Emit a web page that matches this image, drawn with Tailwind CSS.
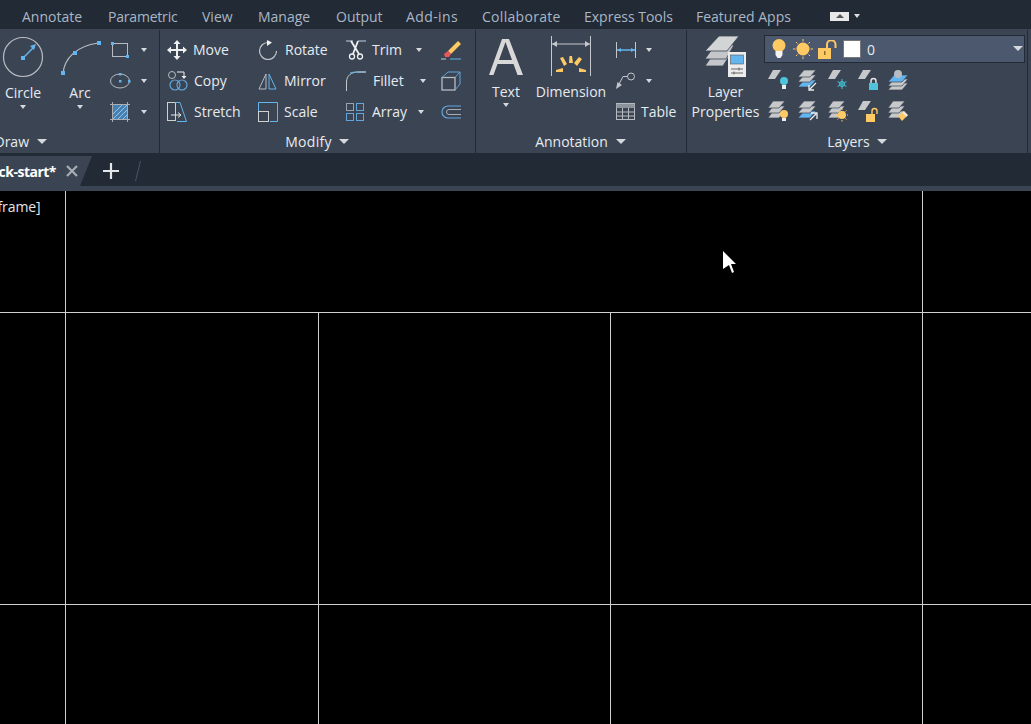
<!DOCTYPE html>
<html lang="en">
<head>
<meta charset="UTF-8">
<title>Ribbon</title>
<script src="https://cdn.jsdelivr.net/npm/@tailwindcss/browser@4"></script>
</head>
<body class="bg-black overflow-hidden font-['Open_Sans',sans-serif] text-[14px] text-[#e6ebf0]">
<div class="w-[1031px] h-[724px] flex flex-col overflow-hidden">

  <!-- top tabs -->
  <div class="h-[29px] bg-[#222a35] flex items-center pl-[22px] pt-[3px] text-[#a9b7c6] shrink-0">
    <span class="w-[86px]">Annotate</span>
    <span class="w-[94px] tracking-[-0.2px]">Parametric</span>
    <span class="w-[56px]">View</span>
    <span class="w-[78px]">Manage</span>
    <span class="w-[70px]">Output</span>
    <span class="w-[76px] tracking-[0.4px]">Add-ins</span>
    <span class="w-[102px] tracking-[0.3px]">Collaborate</span>
    <span class="w-[112px]">Express Tools</span>
    <span class="w-[134px]">Featured Apps</span>
    <span class="w-[19px] h-[9px] bg-[#e8e8e8] flex items-center justify-center"><span class="w-0 h-0 border-x-[4px] border-x-transparent border-b-[4px] border-b-[#555]"></span></span>
    <span class="ml-[5px] w-0 h-0 border-x-[3px] border-x-transparent border-t-[4px] border-t-[#ddd]"></span>
  </div>

  <!-- ribbon -->
  <div class="h-[124px] bg-[#3b4453] flex shrink-0 pt-[1px]">

    <!-- Draw -->
    <div class="w-[160px] border-r border-[#222a35] flex flex-col shrink-0">
      <div class="h-[100px] flex pt-[4px]">
        <div class="w-[46px] flex flex-col items-center">
          <svg width="42" height="42" viewBox="0 0 42 42" fill="none" class="mt-[2px]"><circle cx="21" cy="21" r="19.5" stroke="#b8bcc2" stroke-width="1.2"/><path d="M21 22 32 11" stroke="#62b5ee" stroke-width="1.4"/><path d="M34 8 28 10 32 14z" fill="#62b5ee"/><rect x="19" y="20" width="4" height="4" fill="#62b5ee"/></svg>
          <span class="mt-[5px] leading-[20px]">Circle</span>
          <span class="mt-[2px] w-0 h-0 border-x-[3px] border-x-transparent border-t-[4px] border-t-[#d5d8dc]"></span>
        </div>
        <div class="w-[46px] ml-[11px] flex flex-col items-center">
          <svg width="46" height="42" viewBox="0 0 46 42" fill="none" class="mt-[2px]"><path d="M6 38C7 22 20 10 41 7" stroke="#b8bcc2" stroke-width="1.2"/><rect x="4" y="35" width="4" height="4" fill="#62b5ee"/><rect x="16" y="15" width="4" height="4" fill="#62b5ee"/><rect x="40" y="5" width="4" height="4" fill="#62b5ee"/></svg>
          <span class="mt-[5px] leading-[20px]">Arc</span>
          <span class="mt-[2px] w-0 h-0 border-x-[3px] border-x-transparent border-t-[4px] border-t-[#d5d8dc]"></span>
        </div>
        <div class="ml-[6px] flex flex-col">
          <div class="h-[31px] flex items-center">
            <svg width="22" height="22" viewBox="0 0 22 22" fill="none"><rect x="3.5" y="4.5" width="15" height="13" stroke="#b8bcc2"/><rect x="2" y="3" width="3" height="3" fill="#62b5ee"/><rect x="17" y="16" width="3" height="3" fill="#62b5ee"/></svg>
            <span class="ml-[10px] w-0 h-0 border-x-[3px] border-x-transparent border-t-[4px] border-t-[#d5d8dc]"></span>
          </div>
          <div class="h-[31px] flex items-center">
            <svg width="22" height="22" viewBox="0 0 22 22" fill="none"><ellipse cx="11" cy="11" rx="9.5" ry="7" stroke="#b8bcc2"/><rect x="10" y="10" width="2.5" height="2.5" fill="#62b5ee"/><rect x="10" y="3" width="2.5" height="2.5" fill="#62b5ee"/><rect x="19" y="10" width="2.5" height="2.5" fill="#62b5ee"/></svg>
            <span class="ml-[10px] w-0 h-0 border-x-[3px] border-x-transparent border-t-[4px] border-t-[#d5d8dc]"></span>
          </div>
          <div class="h-[31px] flex items-center">
            <svg width="22" height="22" viewBox="0 0 22 22" fill="none"><rect x="3.5" y="3.5" width="15" height="15" fill="#4a80b0"/><path d="M4 13 13 4M4 18 18 4M9 18 18 9M14 18 18 14" stroke="#8cc8f0"/><path d="M1 3.5H21M1 18.5H21M3.5 1V21M18.5 1V21" stroke="#a9adb3"/></svg>
            <span class="ml-[10px] w-0 h-0 border-x-[3px] border-x-transparent border-t-[4px] border-t-[#d5d8dc]"></span>
          </div>
        </div>
      </div>
      <div class="flex-1 flex items-center justify-end pr-[112px] gap-[8px] pb-[1px]">
        <span>Draw</span>
        <span class="w-0 h-0 border-x-[5px] border-x-transparent border-t-[5px] border-t-[#d5d8dc]"></span>
      </div>
    </div>

    <!-- Modify -->
    <div class="w-[316px] border-r border-[#222a35] flex flex-col shrink-0">
      <div class="h-[100px] pt-[4px] pl-[7px] grid grid-cols-[91px_88px_95px_20px] grid-rows-[31px_31px_31px] items-center">
        <div class="flex items-center gap-[6px]">
          <svg width="20" height="20" viewBox="0 0 20 20" fill="#f0f0f0"><path d="M10 0 13.500 4H11V9H16V6.500L20 10 16 13.500V11H11V16H13.500L10 20 6.500 16H9V11H4V13.500L0 10 4 6.500V9H9V4H6.500z"/></svg>
          <span>Move</span>
        </div>
        <div class="flex items-center gap-[7px]">
          <svg width="20" height="20" viewBox="0 0 20 20" fill="none"><path d="M10 2.500A8.500 8.500 0 1 0 18.500 11" stroke="#c4c8cc" stroke-width="1.200"/><path d="M9 0 14 2.500 9 6z" fill="#f0f0f0"/></svg>
          <span>Rotate</span>
        </div>
        <div class="flex items-center gap-[6px]">
          <svg width="20" height="20" viewBox="0 0 20 20" fill="none"><path d="M0 1H7M12 1H20" stroke="#8fa2b5" stroke-width="1.500"/><path d="M5 1 13 14M12 1 7 14" stroke="#f0f0f0" stroke-width="1.800"/><circle cx="6" cy="16.500" r="2.500" stroke="#f0f0f0" stroke-width="1.300"/><circle cx="14" cy="16.500" r="2.500" stroke="#f0f0f0" stroke-width="1.300"/></svg>
          <span>Trim</span>
          <span class="ml-[8px] w-0 h-0 border-x-[3px] border-x-transparent border-t-[4px] border-t-[#d5d8dc]"></span>
        </div>
        <svg width="20" height="20" viewBox="0 0 20 20" fill="none"><path d="M0 19H5" stroke="#ccc"/><path d="M9 19H20" stroke="#62b5ee"/><path d="M7 11 17 1 20 4 10 14z" fill="#ffc964"/><path d="M7 11 10 14 8 17H4L3 14z" fill="#e8575a"/></svg>

        <div class="flex items-center gap-[6px]">
          <svg width="21" height="20" viewBox="0 0 21 20" fill="none"><circle cx="5" cy="4" r="3.500" stroke="#b8bcc2"/><path d="M10 1H17V6" stroke="#f0f0f0"/><path d="M14.500 5H19.500L17 8z" fill="#f0f0f0"/><circle cx="8" cy="14" r="5" stroke="#62a5dc" stroke-width="1.200"/><circle cx="15" cy="14" r="5" stroke="#62a5dc" stroke-width="1.200"/></svg>
          <span>Copy</span>
        </div>
        <div class="flex items-center gap-[7px]">
          <svg width="19" height="20" viewBox="0 0 19 20" fill="none"><path d="M8 3 1 18H8z" stroke="#b8bcc2"/><path d="M11 3 18 18H11z" stroke="#62b5ee"/></svg>
          <span>Mirror</span>
        </div>
        <div class="flex items-center gap-[7px]">
          <svg width="20" height="20" viewBox="0 0 20 20" fill="none"><path d="M0.500 20V11C0.500 5 5 1 12 1" stroke="#c4c8cc"/><path d="M4 2C6 1.300 8 1 12 1H20" stroke="#62b5ee"/><path d="M12 1H20" stroke="#c4c8cc"/></svg>
          <span>Fillet</span>
          <span class="ml-[9px] w-0 h-0 border-x-[3px] border-x-transparent border-t-[4px] border-t-[#d5d8dc]"></span>
        </div>
        <svg width="20" height="20" viewBox="0 0 20 20" fill="none"><rect x="1" y="6.500" width="13" height="12.500" stroke="#b8bcc2" stroke-width="1.300"/><path d="M1 6.500 7 1H19V13L14 19M14 6.500 19 1" stroke="#62a5dc"/></svg>

        <div class="flex items-center gap-[7px]">
          <svg width="20" height="20" viewBox="0 0 20 20" fill="none"><rect x="0.500" y="0.500" width="8" height="18" stroke="#d0d0d0"/><path d="M4 13H13M11 10.500 14 13 11 15.500" stroke="#e8e8e8"/><path d="M13 0.500 19.500 19.500H10" stroke="#62b5ee"/><path d="M8 0.500H13" stroke="#62b5ee"/></svg>
          <span>Stretch</span>
        </div>
        <div class="flex items-center gap-[6px]">
          <svg width="20" height="20" viewBox="0 0 20 20" fill="none"><path d="M0.500 9V0.500H19.500V19.500H12" stroke="#62b5ee"/><rect x="0.500" y="9.500" width="10" height="10" stroke="#d0d0d0"/></svg>
          <span>Scale</span>
        </div>
        <div class="flex items-center gap-[8px]">
          <svg width="18" height="18" viewBox="0 0 18 18" fill="none"><rect x="0.500" y="0.500" width="7" height="7" stroke="#9aa3ad"/><rect x="10.500" y="0.500" width="7" height="7" stroke="#62a5dc"/><rect x="0.500" y="10.500" width="7" height="7" stroke="#62a5dc"/><rect x="10.500" y="10.500" width="7" height="7" stroke="#62a5dc"/></svg>
          <span>Array</span>
          <span class="ml-[3px] w-0 h-0 border-x-[3px] border-x-transparent border-t-[4px] border-t-[#d5d8dc]"></span>
        </div>
        <svg width="20" height="14" viewBox="0 0 20 14" fill="none"><path d="M20 1H7A6 6 0 0 0 7 13H20" stroke="#62a5dc" stroke-width="1.200"/><path d="M20 4.500H8A2.500 2.500 0 0 0 8 9.500H20" stroke="#a9adb3"/></svg>
      </div>
      <div class="flex-1 flex items-center justify-center gap-[7px] pb-[1px] pr-[1px]">
        <span class="tracking-[0.3px]">Modify</span>
        <span class="w-0 h-0 border-x-[5px] border-x-transparent border-t-[5px] border-t-[#d5d8dc]"></span>
      </div>
    </div>

    <!-- Annotation -->
    <div class="w-[211px] border-r border-[#222a35] flex flex-col shrink-0">
      <div class="h-[100px] flex pt-[4px]">
        <div class="w-[60px] flex flex-col items-center">
          <svg width="36" height="40" viewBox="0 0 36 40" fill="#d8d8d8" class="mt-[3px]"><path d="M14 2H21L35 38H29.500L25.500 27H9.500L5.500 38H1L14 2ZM11 23H24L17.500 5z" fill-rule="evenodd"/></svg>
          <span class="mt-[5px] leading-[20px]">Text</span>
          <span class="mt-[1px] w-0 h-0 border-x-[3px] border-x-transparent border-t-[4px] border-t-[#d5d8dc]"></span>
        </div>
        <div class="w-[76px] ml-[-3px] flex flex-col items-center">
          <svg width="42" height="41" viewBox="0 0 42 41" fill="none" class="mt-[2px]"><path d="M1.500 0V40M40.500 0V40" stroke="#c4c8cc"/><path d="M2 8H40" stroke="#c4c8cc"/><path d="M2 8 7 5V11zM40 8 35 5V11z" fill="#c4c8cc"/><path d="M19.500 20H22L23 27H19zM10 22 13 21 17 28 14 30zM29 21 32 23 27 30 24 27zM6 34 13 32V36H6zM36 34 29 32V36H36z" fill="#ffc964"/></svg>
          <span class="mt-[5px] leading-[20px] whitespace-nowrap">Dimension</span>
        </div>
        <div class="ml-[7px] flex flex-col">
          <div class="h-[31px] flex items-center">
            <svg width="20" height="18" viewBox="0 0 20 18" fill="none"><path d="M0.500 1V17M19.500 1V17" stroke="#c4c8cc"/><path d="M1 9H19" stroke="#62b5ee" stroke-width="1.500"/><path d="M1 9 5 7V11zM19 9 15 7V11z" fill="#62b5ee"/></svg>
            <span class="ml-[10px] w-0 h-0 border-x-[3px] border-x-transparent border-t-[4px] border-t-[#d5d8dc]"></span>
          </div>
          <div class="h-[31px] flex items-center">
            <svg width="20" height="18" viewBox="0 0 20 18" fill="none"><circle cx="15" cy="4.500" r="3.500" stroke="#c4c8cc"/><path d="M11.500 4.500H7L2 14" stroke="#c4c8cc"/><path d="M0 17 1.500 10 6 13z" fill="#c4c8cc"/></svg>
            <span class="ml-[10px] w-0 h-0 border-x-[3px] border-x-transparent border-t-[4px] border-t-[#d5d8dc]"></span>
          </div>
          <div class="h-[31px] flex items-center gap-[6px]">
            <svg width="19" height="17" viewBox="0 0 19 17" fill="none"><rect x="0.500" y="0.500" width="18" height="16" stroke="#b8bcc2"/><path d="M0.500 1H18.500V5H0.500z" fill="#8d939b"/><path d="M1 9H18M1 13H18M6.500 5V16M12.500 5V16" stroke="#b8bcc2"/></svg>
            <span>Table</span>
          </div>
        </div>
      </div>
      <div class="flex-1 flex items-center justify-center gap-[8px] pb-[1px] pr-[1px]">
        <span>Annotation</span>
        <span class="w-0 h-0 border-x-[5px] border-x-transparent border-t-[5px] border-t-[#d5d8dc]"></span>
      </div>
    </div>

    <!-- Layers -->
    <div class="w-[341px] border-r border-[#222a35] flex flex-col shrink-0">
      <div class="h-[100px] flex pt-[4px]">
        <div class="w-[77px] flex flex-col items-center">
          <svg width="41" height="41" viewBox="0 0 41 41" class="mt-[2px]" stroke="#3b4453" stroke-width="0.800"><path d="M9 17H26L18 30H0z" fill="#c4c6c9"/><path d="M10 9H29L21 23H0z" fill="#c4c6c9"/><path d="M14 0H34L22 15H0z" fill="#d2d4d6"/><rect x="23" y="16" width="18" height="25" fill="#ececec" stroke="none"/><rect x="25.500" y="19" width="13" height="9" fill="#62b5ee" stroke="#555" stroke-width="0.600"/><path d="M26 33H38M26 37H38M34 31.500V34.500M29 35.500V38.500" stroke="#666" stroke-width="1"/></svg>
          <span class="mt-[5px] leading-[20px]">Layer</span>
          <span class="leading-[20px] whitespace-nowrap">Properties</span>
        </div>
        <div class="flex flex-col">
          <div class="w-[261px] h-[28px] mt-[1px] bg-[#4b586e] border border-[#222a35] flex items-center pl-[7px] relative">
            <svg width="14" height="20" viewBox="0 0 14 20"><circle cx="7" cy="6.500" r="6.500" fill="#ffc964"/><path d="M3.500 12H10.500V16L8.500 19H5.500L3.500 16z" fill="#f2f2f2"/></svg>
            <svg width="20" height="20" viewBox="0 0 20 20" class="ml-[7px]" stroke="#ffc964"><circle cx="10" cy="10" r="6.500" fill="#ffc964" stroke="none"/><path d="M10 0V2.500M10 17.500V20M0 10H2.500M17.500 10H20M3 3 4.500 4.500M15.500 15.500 17 17M3 17 4.500 15.500M15.500 4.500 17 3"/></svg>
            <svg width="19" height="19" viewBox="0 0 19 19" class="ml-[5px]" fill="none"><rect x="0" y="8" width="13" height="11" fill="#ffc964"/><path d="M9 8V4.500A4 4 0 0 1 17.500 4.500V8" stroke="#ffc964" stroke-width="2"/><rect x="6" y="11" width="1.500" height="4" fill="#8a6d33"/></svg>
            <span class="ml-[6px] w-[18px] h-[18px] bg-white border border-[#777]"></span>
            <span class="ml-[6px]">0</span>
            <span class="absolute right-[1px] top-[10px] w-0 h-0 border-x-[5px] border-x-transparent border-t-[5px] border-t-[#d5d8dc]"></span>
          </div>
          <div class="h-[31px] mt-[2px] flex items-start gap-[10px] pl-[4px] pt-[5px]">
            <svg width="20" height="21" viewBox="0 0 20 21"><path d="M5 0H13L7 9H0z" fill="#c6c8ca"/><circle cx="16" cy="11" r="4" fill="#4fc3d9"/><rect x="14" y="15" width="4" height="4" fill="#eee"/></svg>
            <svg width="20" height="21" viewBox="0 0 20 21" stroke="#3b4453" stroke-width="0.700"><path d="M6 10H18L12 17H0z" fill="#62b5ee"/><path d="M6 5H18L12 12H0z" fill="#c6c8ca"/><path d="M6 0H18L12 7H0z" fill="#c6c8ca"/><path d="M18 13 12 19M11 15V20H16" stroke="#eee" stroke-width="1.300" fill="none"/></svg>
            <svg width="20" height="21" viewBox="0 0 20 21"><path d="M5 0H13L7 9H0z" fill="#c6c8ca"/><path d="M14 9V19M9.500 11.500 18.500 16.500M18.500 11.500 9.500 16.500" stroke="#3aa9bd" stroke-width="1.300"/><circle cx="14" cy="14" r="2.500" fill="none" stroke="#4fc3d9"/></svg>
            <svg width="20" height="21" viewBox="0 0 20 21" fill="none"><path d="M5 0H13L7 9H0z" fill="#c6c8ca"/><rect x="11" y="13" width="9" height="7" fill="#4fc3d9"/><path d="M13 13V11A2.500 2.500 0 0 1 18 11V13" stroke="#e8e8e8" stroke-width="1.400"/></svg>
            <svg width="20" height="21" viewBox="0 0 20 21" stroke="#3b4453" stroke-width="0.700"><path d="M6 13H20L14 20H0z" fill="#c6c8ca"/><path d="M6 9H20L14 16H0z" fill="#c6c8ca"/><path d="M6 5H20L14 12H0z" fill="#62b5ee"/><circle cx="10" cy="4" r="4" fill="#b8bcc2" stroke="none"/></svg>
          </div>
          <div class="h-[31px] flex items-start gap-[10px] pl-[4px] pt-[5px]">
            <svg width="20" height="21" viewBox="0 0 20 21" stroke="#3b4453" stroke-width="0.700"><path d="M5 10H17L11 17H0z" fill="#c6c8ca"/><path d="M5 5H17L11 12H0z" fill="#c6c8ca"/><path d="M5 0H17L11 7H0z" fill="#c6c8ca"/><circle cx="16" cy="13" r="4" fill="#ffc964" stroke="none"/><rect x="14" y="17" width="4" height="3" fill="#eee" stroke="none"/></svg>
            <svg width="20" height="21" viewBox="0 0 20 21" stroke="#3b4453" stroke-width="0.700"><path d="M6 10H18L12 17H0z" fill="#62b5ee"/><path d="M6 5H18L12 12H0z" fill="#c6c8ca"/><path d="M6 0H18L12 7H0z" fill="#c6c8ca"/><path d="M12 19 18 13M13 12H19V18" stroke="#eee" stroke-width="1.300" fill="none"/></svg>
            <svg width="20" height="21" viewBox="0 0 20 21" stroke="#3b4453" stroke-width="0.700"><path d="M5 10H17L11 17H0z" fill="#c6c8ca"/><path d="M5 5H17L11 12H0z" fill="#c6c8ca"/><path d="M5 0H17L11 7H0z" fill="#c6c8ca"/><circle cx="14" cy="14" r="4" fill="#ffc964" stroke="none"/><path d="M14 7.500V9M14 19V20.500M7.500 14H9M19 14H20.500M9.500 9.500 10.500 10.500M17.500 17.500 18.500 18.500M9.500 18.500 10.500 17.500M17.500 10.500 18.500 9.500" stroke="#ffc964" stroke-width="1"/></svg>
            <svg width="20" height="21" viewBox="0 0 20 21" fill="none"><path d="M5 0H13L7 9H0z" fill="#c6c8ca"/><rect x="8" y="13" width="9" height="8" fill="#ffc964"/><path d="M14 13V10A2.500 2.500 0 0 1 19 10V13" stroke="#ffc964" stroke-width="1.400"/></svg>
            <svg width="20" height="21" viewBox="0 0 20 21" stroke="#3b4453" stroke-width="0.700"><path d="M5 10H17L11 17H0z" fill="#c6c8ca"/><path d="M5 5H17L11 12H0z" fill="#c6c8ca"/><path d="M5 0H17L11 7H0z" fill="#c6c8ca"/><path d="M10 15 16 10 20 14 14 20z" fill="#ffc964" stroke="none"/><path d="M15 11 19 15" stroke="#eee" stroke-width="2"/></svg>
          </div>
        </div>
      </div>
      <div class="flex-1 flex items-center justify-center gap-[7px] pb-[1px]">
        <span>Layers</span>
        <span class="w-0 h-0 border-x-[5px] border-x-transparent border-t-[5px] border-t-[#d5d8dc]"></span>
      </div>
    </div>
  </div>

  <!-- file tabs -->
  <div class="h-[33px] bg-[#222a35] flex items-end shrink-0">
    <div class="w-[92px] h-[30px] bg-[#3b4453] [clip-path:polygon(0_0,100%_0,80px_100%,0_100%)] flex items-center justify-end pr-[14px] gap-[10px]">
      <span class="font-bold text-white whitespace-nowrap tracking-[-0.5px]">ck-start*</span>
      <svg width="12" height="12" viewBox="0 0 12 12" stroke="#a8adb5" stroke-width="2.200" class="shrink-0"><path d="M1 1 11 11M11 1 1 11"/></svg>
    </div>
    <svg width="16" height="16" viewBox="0 0 16 16" stroke="#e4e6e8" stroke-width="2.200" class="ml-[11px] mb-[7px]"><path d="M8 0V16M0 8H16"/></svg>
    <svg width="6" height="20" viewBox="0 0 6 20" stroke="#4a5566" class="ml-[16px] mb-[5px]"><path d="M5.500 0 0.500 20"/></svg>
  </div>
  <div class="h-[5px] bg-[#3b4453] shrink-0"></div>

  <!-- drawing canvas -->
  <div class="relative flex-1 bg-black overflow-hidden">
    <span class="absolute left-[-7px] top-[6px] leading-[20px] text-[#e6e6e6] tracking-[-0.1px]">[frame]</span>
    <div class="absolute left-[65px] top-0 bottom-0 w-px bg-[#d0d0d0]"></div>
    <div class="absolute left-[922px] top-0 bottom-0 w-px bg-[#d0d0d0]"></div>
    <div class="absolute left-0 right-0 top-[121px] h-px bg-[#d0d0d0]"></div>
    <div class="absolute left-0 right-0 top-[413px] h-px bg-[#d0d0d0]"></div>
    <div class="absolute left-[318px] top-[121px] bottom-0 w-px bg-[#d0d0d0]"></div>
    <div class="absolute left-[610px] top-[121px] bottom-0 w-px bg-[#d0d0d0]"></div>
    <svg width="14" height="24" viewBox="0 0 14 24" class="absolute left-[723px] top-[60px]" fill="#fff"><path d="M0 0 13 13H8L11 21 9 22 6 14 0 18z"/></svg>
  </div>
</div>
</body>
</html>
